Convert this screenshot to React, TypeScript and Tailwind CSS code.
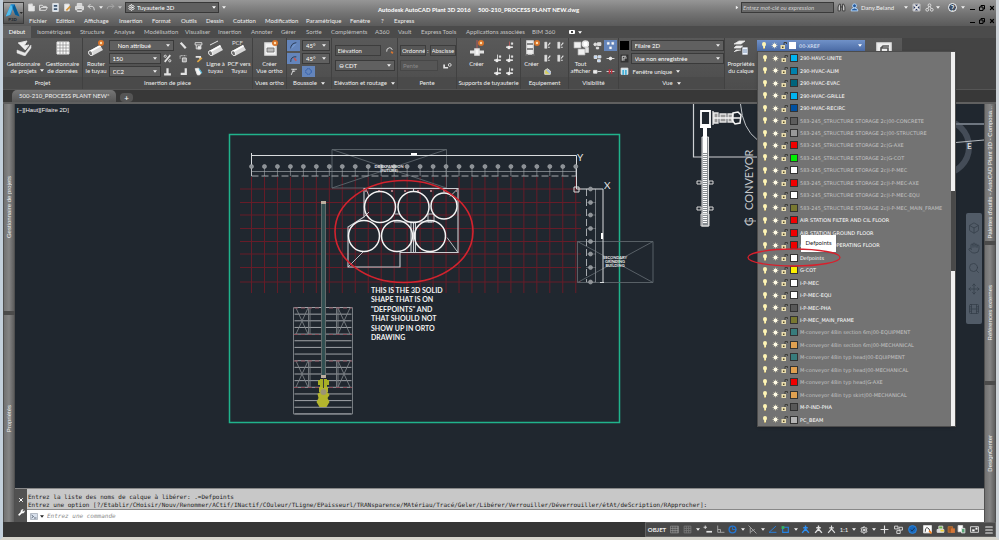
import type { ReactNode } from 'react';
import { X, Wrench, Menu, Settings, Hand, Move, Search, Box, Film } from 'lucide-react';

interface Layer {
  name: string;
  color: string;
  xref?: boolean;
}

const LAYERS: Layer[] = [
  { name: '290-HAVC-UNITE', color: '#00b4f0' },
  { name: '290-HVAC-ALIM', color: '#0080ac' },
  { name: '290-HVAC-EVAC', color: '#00647c' },
  { name: '290-HVAC-GRILLE', color: '#00b4f0' },
  { name: '290-HVAC-RECIRC', color: '#0050a0' },
  { name: '583-245_STRUCTURE STORAGE 2c|00-CONCRETE', color: '#5c5c5c', xref: true },
  { name: '583-245_STRUCTURE STORAGE 2c|00-STRUCTURE', color: '#989898', xref: true },
  { name: '583-245_STRUCTURE STORAGE 2c|G-AXE', color: '#f00000', xref: true },
  { name: '583-245_STRUCTURE STORAGE 2c|G-COT', color: '#00f000', xref: true },
  { name: '583-245_STRUCTURE STORAGE 2c|I-P-MEC', color: '#ffffff', xref: true },
  { name: '583-245_STRUCTURE STORAGE 2c|I-P-MEC-AXE', color: '#f00000', xref: true },
  { name: '583-245_STRUCTURE STORAGE 2c|I-P-MEC-EQU', color: '#ffffff', xref: true },
  { name: '583-245_STRUCTURE STORAGE 2c|I-P-MEC_MAIN_FRAME', color: '#787830', xref: true },
  { name: 'AIR STATION FILTER AND CIL FLOOR', color: '#f00000' },
  { name: 'AIR STATION GROUND FLOOR', color: '#f00000' },
  { name: 'AIR STATION OPERATING FLOOR', color: '#f00000' },
  { name: 'Defpoints', color: '#ffffff' },
  { name: 'G-COT', color: '#fcf000' },
  { name: 'I-P-MEC', color: '#ffffff' },
  { name: 'I-P-MEC-EQU', color: '#ffffff' },
  { name: 'I-P-MEC-PHA', color: '#585858' },
  { name: 'I-P-MEC_MAIN_FRAME', color: '#787830' },
  { name: 'M-conveyor 48in section 6m|00-EQUIPMENT', color: '#387c7c', xref: true },
  { name: 'M-conveyor 48in section 6m|00-MECHANICAL', color: '#e0a050', xref: true },
  { name: 'M-conveyor 48in typ head|00-EQUIPMENT', color: '#387c7c', xref: true },
  { name: 'M-conveyor 48in typ head|00-MECHANICAL', color: '#e0a050', xref: true },
  { name: 'M-conveyor 48in typ head|G-AXE', color: '#f00000', xref: true },
  { name: 'M-conveyor 48in typ skirt|00-MECHANICAL', color: '#e0a050', xref: true },
  { name: 'M-P-IND-PHA', color: '#585858' },
  { name: 'PC_BEAM', color: '#b4b4b4' },
];

const MENUS = [
  { label: 'Fichier', width: 'w-[27px]' },
  { label: 'Edition', width: 'w-[28px]' },
  { label: 'Affichage', width: 'w-[35px]' },
  { label: 'Insertion', width: 'w-[33px]' },
  { label: 'Format', width: 'w-[29px]' },
  { label: 'Outils', width: 'w-[25px]' },
  { label: 'Dessin', width: 'w-[27px]' },
  { label: 'Cotation', width: 'w-[32px]' },
  { label: 'Modification', width: 'w-[41px]' },
  { label: 'Paramétrique', width: 'w-[44px]' },
  { label: 'Fenêtre', width: 'w-[31px]' },
  { label: '?', width: 'w-[13px]' },
  { label: 'Express', width: 'w-[30px]' },
];

const TABS = [
  { label: 'Isométriques', width: 'w-[43px]' },
  { label: 'Structure', width: 'w-[34px]' },
  { label: 'Analyse', width: 'w-[30px]' },
  { label: 'Modélisation', width: 'w-[41px]' },
  { label: 'Visualiser', width: 'w-[33px]' },
  { label: 'Insertion', width: 'w-[33px]' },
  { label: 'Annoter', width: 'w-[30px]' },
  { label: 'Gérer', width: 'w-[25px]' },
  { label: 'Sortie', width: 'w-[25px]' },
  { label: 'Compléments', width: 'w-[44px]' },
  { label: 'A360', width: 'w-[23px]' },
  { label: 'Vault', width: 'w-[23px]' },
  { label: 'Express Tools', width: 'w-[45px]' },
  { label: 'Applications associées', width: 'w-[66px]' },
  { label: 'BIM 360', width: 'w-[30px]' },
];

const Caret = ({ className = '' }: { className?: string }) => (
  <svg viewBox="0 0 6 4" className={`h-[3px] w-[4px] shrink-0 ${className}`} fill="currentColor" aria-hidden="true">
    <path d="M0 0h6L3 4z" />
  </svg>
);

const Icon = ({ size = 'size-[9px]', children }: { size?: string; children: ReactNode }) => (
  <svg viewBox="0 0 16 16" className={`${size} shrink-0`} fill="none" stroke="#e2e2e2" strokeWidth="1.6" aria-hidden="true">
    {children}
  </svg>
);

const Spark = ({ x = 13, y = 3 }: { x?: number; y?: number }) => (
  <g stroke="none">
    <circle cx={x} cy={y} r="3" fill="#d8742a" />
    <circle cx={x} cy={y} r="1.2" fill="#ffe0b0" />
  </g>
);

const Pipe = () => (
  <g stroke="none">
    <path d="M1 11 12 5l3 5-11 6z" fill="#d8d8d8" />
    <path d="m2 10.500 10-5.500 1 1.500-10 5.500z" fill="#fff" />
    <ellipse cx="2.500" cy="13.200" rx="1.800" ry="2.600" fill="#6c6c6c" stroke="#fff" strokeWidth=".8" transform="rotate(-30 2.500 13.200)" />
  </g>
);

const IconButton = ({ label, active, children }: { label: string; active?: boolean; children: ReactNode }) => (
  <button
    type="button"
    aria-label={label}
    className={`flex h-[11px] w-[13px] items-center justify-center ${active ? 'bg-[#6485bb]' : ''}`}
  >
    {children}
  </button>
);

const BigButton = ({ lines, width, caret, children }: { lines: string[]; width: string; caret?: boolean; children: ReactNode }) => (
  <button type="button" className={`relative flex h-9 shrink-0 flex-col items-center ${width}`}>
    {children}
    <span className="mt-1 block leading-[7px] whitespace-nowrap">
      {lines.map((line) => (
        <span key={line} className="block">{line}</span>
      ))}
    </span>
    {caret && <Caret className="absolute right-0 bottom-1" />}
  </button>
);

const Dropdown = ({ label, value, className }: { label: string; value: string; className: string }) => (
  <span className={`relative flex h-[11px] shrink-0 items-center border border-[#3a3a3a] bg-[#606060] ${className}`}>
    <select aria-label={label} className="h-full w-full appearance-none bg-transparent pl-[3px] text-[6px] leading-[9px] text-white outline-none">
      <option>{value}</option>
    </select>
    <Caret className="absolute right-[3px] pointer-events-none" />
  </span>
);

const Panel = ({ title, width, caret, children }: { title: string; width: string; caret?: boolean; children: ReactNode }) => (
  <section className={`flex shrink-0 flex-col border-r border-[#414141] bg-gradient-to-b from-[#595959] to-[#4d4d4d] pt-[2px] ${width}`}>
    <div className="flex flex-1 items-start justify-center">{children}</div>
    <h2 className="flex h-3 items-center justify-center gap-1 bg-[#4a4a4a] whitespace-nowrap">
      {title}
      {caret && <Caret />}
    </h2>
  </section>
);

const QuickAccess = () => (
  <div className="flex items-center gap-[3px] pl-[3px]">
    <Icon><path d="M3 2h6v4h4v8H3z" fill="#e8e8e8" /><path d="M9 1v5h5" /></Icon>
    <Icon><path d="M1 13V4h5l1 2h6v2M1 13l3-5h11l-3 5z" /></Icon>
    <Icon><path d="M3 1h10v14H3z" fill="#d8e4f0" /><path d="M5 5h6M5 11h6" stroke="#40566e" strokeWidth="3" /></Icon>
    <Icon><path d="M3 2h8v12H3z" fill="#eee" /><path d="m6 13 7-7" stroke="#d29338" strokeWidth="3" /></Icon>
    <Icon><path d="M4 6V1h8v5M1 6h14v6H1zM4 10h8v5H4z" fill="#d5d5d5" /><path d="M4 12h8" stroke="#555" /></Icon>
    <Icon><path d="m6 2-4 4 4 4M2 6h7q4 0 4 7" /></Icon>
    <Caret />
    <span className="opacity-40"><Icon><path d="m10 2 4 4-4 4M14 6H6q-4 0-4 5" /></Icon></span>
    <Caret className="opacity-60" />
  </div>
);

const TitleBar = () => (
  <header className="flex bg-gradient-to-b from-[#969696] via-[#747474] to-[#5a5a5a]">
    <button
      type="button"
      aria-label="Menu de l'application"
      className="mt-[2px] flex h-[22px] w-[21px] shrink-0 items-center justify-center border border-[#3c3c3c] bg-gradient-to-b from-[#a9a9a9] to-[#505050]"
    >
      <svg viewBox="0 0 22 22" className="size-5" aria-hidden="true">
        <path d="M8 1h4l6 14-5-2-3-7-2 7-6 2z" fill="#1b87cd" />
        <path d="m8 1 2 4-3 8-5 2z" fill="#54bdec" />
        <path d="m12 1 6 14-5-2-3-8z" fill="#075992" />
        <text x="5" y="20" fontSize="5" fontWeight="bold" fill="#17232d">P3D</text>
        <path d="M18 10h4l-2 2z" fill="#111" />
      </svg>
    </button>
    <div className="flex min-w-0 flex-1 flex-col">
      <div className="flex h-[15px] items-center">
        <QuickAccess />
        <span className="relative ml-[3px] flex h-[11px] w-[94px] shrink-0 items-center border border-[#383838] bg-[#606060] text-white">
          <Settings className="ml-[2px] size-[7px] shrink-0" strokeWidth={3} />
          <select aria-label="Espace de travail" className="w-full appearance-none bg-transparent pl-[2px] text-[6px] leading-[9px] outline-none">
            <option>Tuyauterie 3D</option>
          </select>
          <Caret className="absolute right-[2px]" />
        </span>
        <Caret className="ml-[3px]" />
        <h1 className="flex-1 pt-1 pr-1 text-center text-[6px] font-bold whitespace-pre text-white">
          {'Autodesk AutoCAD Plant 3D 2016     500-210_PROCESS PLANT NEW.dwg'}
        </h1>
        <div className="flex w-[261px] shrink-0 items-center">
          <Caret className="mr-[2px] -rotate-90" />
          <input
            aria-label="Recherche"
            placeholder="Entrez mot-clé ou expression"
            className="h-[11px] w-[93px] border border-[#3a3a3a] bg-[#686868] pl-[1px] text-[6px] italic outline-none placeholder:text-[#d0d0d0]"
          />
          <span className="ml-[3px]"><Icon><path d="M2 14V7l2-5h2v12zm12 0V7l-2-5h-2v12zM6 7h4" fill="#ddd" stroke="#333" /></Icon></span>
          <span className="ml-1"><Icon><circle cx="8" cy="5" r="3.500" stroke="#b8daff" fill="#24599a" /><path d="M2 14q0-5 6-5t6 5z" fill="#24599a" stroke="#b8daff" /></Icon></span>
          <span className="ml-[2px] w-[43px]">Dany.Beland</span>
          <Caret />
          <span className="ml-1"><Icon><path d="M2 2h12v12H2z" fill="#1e2d58" /><path d="m3 3 10 10M13 3 3 13" strokeWidth="3" /></Icon></span>
          <span className="ml-1"><Icon><circle cx="8" cy="4" r="2.500" /><circle cx="4" cy="12" r="2.500" /><circle cx="12" cy="12" r="2.500" /><path d="M7 6 5 10M9 6l2 4" /></Icon></span>
          <Caret className="ml-[2px]" />
          <button type="button" aria-label="Aide" className="ml-2 flex size-[9px] items-center justify-center rounded-full border border-white bg-[#3c4d64] text-[7px] font-bold">?</button>
          <Caret className="ml-1" />
          <WindowButtons />
        </div>
      </div>
      <div className="flex h-[11px] items-center">
        <nav className="flex pl-[5px]" aria-label="Menu">
          {MENUS.map((menu) => (
            <a key={menu.label} href="#" className={`shrink-0 whitespace-nowrap ${menu.width}`}>{menu.label}</a>
          ))}
        </nav>
        <WindowButtons />
      </div>
    </div>
  </header>
);

const WindowButtons = () => (
  <div className="mr-[1px] ml-auto flex items-center gap-1 text-black">
    <button type="button" aria-label="Réduire" className="mt-1 h-[1px] w-[5px] bg-black" />
    <button type="button" aria-label="Restaurer">
      <svg viewBox="0 0 12 12" className="block size-[6px]" fill="none" stroke="currentColor" strokeWidth="2" aria-hidden="true">
        <path d="M1 4h7v7H1zM4 4V1h7v7H8" />
      </svg>
    </button>
    <button type="button" aria-label="Fermer"><X className="size-[6px]" strokeWidth={5} /></button>
  </div>
);

const RibbonTabs = () => (
  <nav className="flex h-3 items-center bg-[#4b4b4b] text-[#c4c4c4]" aria-label="Ruban">
    <a href="#" className="mr-[6px] flex h-full w-[28px] items-center justify-center bg-[#646464] text-white">Début</a>
    {TABS.map((tab) => (
      <a key={tab.label} href="#" className={`shrink-0 whitespace-nowrap ${tab.width}`}>{tab.label}</a>
    ))}
    <span className="ml-[7px] flex h-1 w-[6px] items-center justify-center rounded-[1px] bg-white"><i className="size-[2px] bg-[#444]" /></span>
    <Caret className="ml-[3px] text-white" />
  </nav>
);

const LayerStateIcons = () => (
  <svg viewBox="0 0 26 9" className="h-[9px] w-[26px] shrink-0" aria-hidden="true">
    <path d="M3 1q2 0 2 2Q5 4.500 4 5.500v2H2.200v-2Q1 4.500 1 3 1 1 3 1z" fill="#fff5b4" />
    <path d="M2.200 7h1.800v1H2.200z" fill="#b9a870" />
    <path d="M13.500 1.500v6M10.500 4.500h6M11.500 2.500l4 4M15.500 2.500l-4 4" stroke="#efe6bd" strokeWidth=".6" />
    <circle cx="13.500" cy="4.500" r="1.900" fill="#fffbe6" />
    <path d="M19.500 4h4.500v4h-4.500z" fill="#e8dcae" />
    <path d="M23 4V1.500h2.500V3" fill="none" stroke="#3f3f3a" />
    <path d="M21 5.500h1.500V7H21z" fill="#554b28" />
  </svg>
);

const LayerList = () => (
  <div className="absolute top-full left-0 z-10 flex h-[376px] w-[199px] border border-[#4c4c4c] bg-[#737373] shadow">
    <ul role="listbox" aria-label="Calques" className="grid flex-1 auto-rows-fr">
      {LAYERS.map((layer) => (
        <li
          key={layer.name}
          role="option"
          aria-selected={layer.name === 'Defpoints'}
          className={`relative flex items-center whitespace-nowrap ${layer.xref ? 'text-[#c4c4c4]' : 'text-white'}`}
        >
          <span className="pl-1"><LayerStateIcons /></span>
          <i className="mr-[2px] ml-[2px] size-2 border border-[#333]" style={{ backgroundColor: layer.color }} />
          {layer.name}
          {layer.name === 'Defpoints' && (
            <>
              <svg viewBox="0 0 94 19" className="absolute -left-[11px] z-10 h-[19px] w-[94px]" fill="none" aria-hidden="true">
                <ellipse cx="47" cy="9.500" rx="46" ry="8.500" stroke="#d8202c" strokeWidth="1.300" />
              </svg>
              <span role="tooltip" className="absolute bottom-3 left-[43px] flex h-[17px] w-[35px] items-center justify-center bg-white font-[Lato,sans-serif] text-[6px] text-[#222] shadow">Defpoints</span>
            </>
          )}
        </li>
      ))}
    </ul>
    <div className="flex w-1 flex-col bg-[#f0f0f0]">
      <i className="mt-[139px] h-20 bg-[#494949]" />
    </div>
  </div>
);

const Ribbon = () => (
  <div className="flex h-[51px] bg-[#444]">
    <Panel title="Projet" width="w-[80px]">
      <BigButton lines={['Gestionnaire', 'de projets']} width="w-[40px]" caret>
        <Icon size="size-[16px]"><path d="m2 3 9-2-3 5 5-1-4 5" fill="#eee" strokeWidth="1" /><path d="m1 10 8 3 6-8v3l-6 8-8-3z" fill="#e8e8e8" strokeWidth=".5" /></Icon>
      </BigButton>
      <BigButton lines={['Gestionnaire', 'de données']} width="w-[38px]">
        <Icon size="size-[16px]"><path d="M2 2h12v12H2z" fill="#fafafa" strokeWidth="1" /><path d="M2 5h12M2 8h12M2 11h12M5 2v12M8 2v12M11 2v12" stroke="#8a8a8a" strokeWidth=".7" /></Icon>
      </BigButton>
    </Panel>
    <Panel title="Insertion de pièce" width="w-[170px]">
      <BigButton lines={['Router', 'le tuyau']} width="w-[25px]">
        <Icon size="size-[16px]"><Pipe /><Spark /></Icon>
      </BigButton>
      <div className="flex w-[68px] flex-col gap-[2px]">
        <Dropdown label="Ligne" value="Non attribué" className="w-[65px] pl-[5px]" />
        <div className="flex items-center"><Dropdown label="Taille" value="150" className="w-[52px]" /><IconButton label="Raccord"><Icon><path d="m3 14 10-12" strokeWidth="3" /><circle cx="4" cy="4" r="2" /><circle cx="12" cy="12" r="2" /></Icon></IconButton></div>
        <div className="flex items-center"><Dropdown label="Spécification" value="CC2" className="w-[52px]" /><IconButton label="Té"><Icon><path d="M8 2v9M2 13h12" strokeWidth="4" /></Icon></IconButton></div>
      </div>
      <div className="grid grid-cols-2 gap-x-[2px] gap-y-[2px]">
        <IconButton label="Coude"><Icon><path d="m3 3 9 10" strokeWidth="4" /></Icon></IconButton>
        <IconButton label="Catalogue"><Icon><path d="M2 3h12v4H2zM4 7v7h8V7" /><path d="M7 10h5v4H7z" fill="#eee" /></Icon></IconButton>
        <IconButton label="Cadre"><Icon><path d="M2 8V3h11" strokeDasharray="2 1" /><path d="M6 7h7v7H6z" fill="#999" /></Icon></IconButton>
        <IconButton label="Modifier"><Icon><path d="M3 5h8v4" strokeWidth="3" /><path d="m6 14 8-7" stroke="#e0a744" strokeWidth="3" /></Icon></IconButton>
        <IconButton label="Angle"><Icon><path d="M12 2v10H3" strokeWidth="4" /></Icon></IconButton>
        <IconButton label="Isolant"><Icon><path d="m2 3 6-1 5 8-3 4H6z" fill="#f3f3f3" /><path d="m9 3 5 8" stroke="#55b8d8" strokeWidth="2" /></Icon></IconButton>
      </div>
      <BigButton lines={['Ligne à', 'tuyau']} width="w-[22px]">
        <Icon size="size-[16px]"><Pipe /><path d="m2 5 8-4" strokeWidth="1" /></Icon>
      </BigButton>
      <BigButton lines={['PCF vers', 'Tuyau']} width="w-[25px]">
        <Icon size="size-[16px]"><Pipe /><text x="1" y="5" fontSize="6" fill="#ddd" stroke="none">PCF</text></Icon>
      </BigButton>
    </Panel>
    <Panel title="Vues ortho" width="w-[34px]">
      <BigButton lines={['Créer', 'Vue ortho']} width="w-[32px]">
        <Icon size="size-[16px]"><path d="M3 3h8l3 3v9H3z" fill="#f2f2f2" /><path d="M5 8h7v4H5z" fill="#b8b8b8" stroke="#666" strokeWidth=".8" /><Spark /></Icon>
      </BigButton>
    </Panel>
    <Panel title="Boussole" width="w-[45px]" caret>
      <div className="grid grid-cols-[14px_29px] gap-x-[1px] gap-y-[2px]">
        <IconButton label="Accrochage" active><Icon><path d="M3 14Q3 4 13 3" stroke="#26344c" /><path d="m3 14 9-9" stroke="#80a8e0" /></Icon></IconButton>
        <Dropdown label="Pas angulaire" value="45°" className="w-[28px]" />
        <IconButton label="Tolérance" active><Icon><path d="M3 14Q3 4 13 5" stroke="#26344c" /><path d="m9 7 4 5" stroke="#bf5757" strokeWidth="3" /></Icon></IconButton>
        <Dropdown label="Tolérance angulaire" value="45°" className="w-[28px]" />
        <IconButton label="Plan"><Icon><path d="m4 14 4-10M4 4h10M7 8l4-1" /></Icon></IconButton>
        <IconButton label="Boussole" active><Icon><circle cx="8" cy="8" r="5" stroke="#2252a5" strokeDasharray="3 1" /></Icon></IconButton>
      </div>
    </Panel>
    <Panel title="Elévation et routage" width="w-[66px]" caret>
      <div className="flex w-[60px] flex-col gap-1 pt-[5px]">
        <div className="flex items-center gap-1">
          <input aria-label="Elévation" defaultValue="Elévation" className="h-[11px] w-[46px] border border-[#3d3d3d] bg-[#565656] pl-[2px] text-[6px]" />
          <Icon><path d="M3 10q-1-6 5-7 4 0 5 4" /><path d="m11 10 3 3" stroke="#dc772f" strokeWidth="3" /></Icon>
        </div>
        <div className="flex items-center">
          <Dropdown label="Ligne d'axe" value="⊖ CDT" className="w-[60px]" />
        </div>
      </div>
    </Panel>
    <Panel title="Pente" width="w-[59px]">
      <div className="flex w-[54px] flex-col gap-1 pt-[5px]">
        <div className="flex items-center gap-[1px]">
          <input aria-label="Ordonnée" defaultValue="Ordonné" className="h-[11px] w-[26px] border border-[#3d3d3d] bg-[#565656] pl-[1px] text-[6px]" />
          :
          <input aria-label="Abscisse" defaultValue="Abscisse" className="h-[11px] w-[26px] border border-[#3d3d3d] bg-[#565656] pl-[1px] text-[6px]" />
        </div>
        <div className="flex items-center gap-[5px]">
          <input aria-label="Pente" placeholder="Pente" className="h-[11px] w-[38px] border border-[#474747] bg-[#565656] pl-[2px] text-[6px] placeholder:text-[#888]" />
          <Icon><path d="M2 6v6h7" strokeWidth="3" /><circle cx="12" cy="7" r="2.500" /></Icon>
        </div>
      </div>
    </Panel>
    <Panel title="Supports de tuyauterie" width="w-[64px]">
      <BigButton lines={['Créer']} width="w-[28px]">
        <Icon size="size-[16px]"><path d="M8 0v10" stroke="#b05c5c" strokeWidth="1" /><path d="M1 12h14" strokeWidth="3" /><path d="M6 9h4v6H6z" fill="#f5f5f5" /><Spark x={12} /></Icon>
      </BigButton>
      <SupportGrid />
    </Panel>
    <Panel title="Equipement" width="w-[48px]">
      <BigButton lines={['Créer']} width="w-[18px]">
        <Icon size="size-[16px]"><path d="M3 1h6v13H3z" fill="#eee" /><path d="M3 4h6M3 9h6M1 15h3M8 15h3" stroke="#666" /><Spark /></Icon>
      </BigButton>
      <div className="grid grid-cols-2 gap-y-[2px]">
        {['Modifier', 'Convertir', 'Attacher', 'Détacher'].map((label) => (
          <IconButton key={label} label={label}><Icon><path d="M3 2h4v11H3z" fill="#ddd" strokeWidth=".8" /><path d="m9 8 4-5M9 11h3" strokeWidth="2" /></Icon></IconButton>
        ))}
        <IconButton label="Buse"><Icon><path d="M3 13V6l5-3 5 4v6z" fill="#d4cd5e" /><path d="m7 5 6 6" stroke="#9ebbf3" strokeWidth="3" /></Icon></IconButton>
      </div>
    </Panel>
    <Panel title="Visibilité" width="w-[50px]">
      <BigButton lines={['Tout', 'afficher']} width="w-[21px]">
        <Icon size="size-[16px]"><path d="M1 2h7v6H1zM5 9h7v6H5z" fill="#f0f0f0" stroke="#aaa" strokeWidth=".7" /><circle cx="12.500" cy="4" r="3" fill="#fff" /><path d="M13 8h2v4h-2z" fill="#ddd" /></Icon>
      </BigButton>
      <div className="grid grid-cols-2 gap-y-[2px]">
        <IconButton label="Isoler"><Icon><circle cx="4" cy="6" r="2.500" fill="#ddd" /><path d="M8 3h6v5H8zM6 11h4v3H6z" fill="#ddd" /></Icon></IconButton>
        <IconButton label="Masquer" active><Icon><path d="M2 2h4v4H2zM10 2h4v4h-4zM6 10h4v4H6z" fill="#fff" strokeWidth=".5" /></Icon></IconButton>
        <IconButton label="Inverser"><Icon><path d="M2 3h5v5H2zM9 3h5v4H9zM8 10h5v4H8z" fill="#b7d7ff" /></Icon></IconButton>
        <IconButton label="Joint"><Icon><path d="M1 8h14" /><circle cx="8" cy="8" r="2.500" fill="#eee" /></Icon></IconButton>
        <IconButton label="Ligne"><Icon><path d="M1 6h6v5H1z" fill="#eee" /><path d="M8 8h7" /></Icon></IconButton>
        <IconButton label="Déconnexion"><Icon><path d="M1 8h14" /><path d="M6 4v8M10 4v8" stroke="#c12e3c" strokeWidth="2.500" /></Icon></IconButton>
      </div>
    </Panel>
    <Panel title="Vue" width="w-[106px]" caret>
      <div className="flex w-[104px] flex-col gap-[2px]">
        <div className="flex items-center gap-[2px]"><i className="size-[9px] shrink-0 bg-black" /><Dropdown label="Style visuel" value="Filaire 2D" className="w-[93px]" /></div>
        <div className="flex items-center gap-[2px]"><Icon><path d="M1 1h14v14H1z" fill="#333" stroke="none" /><path d="M4 12V4h7M7 12V7h5" /></Icon><Dropdown label="Vue" value="Vue non enregistrée" className="w-[93px]" /></div>
        <button type="button" className="flex h-[11px] items-center gap-1"><Icon><path d="M2 2h12v11H2z" fill="#e3f6ff" /><path d="M4 5h8v9H4z" fill="#45afd7" stroke="none" /><path d="M8 5v9" /></Icon>Fenêtre unique<Caret /></button>
      </div>
    </Panel>
    <section className="flex w-[177px] shrink-0 items-start bg-gradient-to-b from-[#595959] to-[#4d4d4d] pt-[2px]">
      <BigButton lines={['Propriétés', 'du calque']} width="w-[32px]">
        <Icon size="size-[16px]"><path d="m1 4 5-3h6L8 4zM1 8l2-2h7L8 8zM1 12l2-2h5" fill="#f0f0f0" strokeWidth=".8" /><path d="M9 7h6v8H9z" fill="#eef5ff" stroke="#555" strokeWidth=".7" /><path d="M10 10h4M10 12h4" stroke="#58779f" strokeWidth=".8" /></Icon>
      </BigButton>
      <div className="relative font-['DejaVu_Sans',sans-serif] text-[5px]">
        <button type="button" aria-haspopup="listbox" aria-expanded="true" className="flex h-[11px] w-[108px] items-center bg-gradient-to-b from-[#7091c8] to-[#4b6ba5] pr-[3px] pl-1 text-[#e6eefb]">
          <LayerStateIcons />
          <i className="mr-[3px] ml-[2px] size-[7px] bg-white" />
          00-XREF
          <Caret className="ml-auto text-white" />
        </button>
        <LayerList />
      </div>
      <span className="ml-[11px] pt-[1px]"><Icon size="size-[16px]"><path d="M1 2h14v13H1z" fill="#eee" /><path d="M5 14V7h7v8M5 7l2-2h6" stroke="#555" /></Icon></span>
    </section>
  </div>
);

const SupportGrid = () => (
  <div className="grid grid-cols-[12px_12px] gap-y-[2px]">
    {['Ajouter', 'Modifier', 'Attacher', 'Copier', 'Convertir', 'Verrouiller'].map((label, i) => (
      i === 0 ? <span key={label} /> : (
        <IconButton key={label} label={label}><Icon><path d="M8 1v9" stroke={i === 1 ? '#b65a5a' : '#ddd'} /><path d="M2 11h12" strokeWidth="3" /><path d="M5 9h4v5H5zM11 3h3v3h-3z" fill="#eee" strokeWidth=".7" /></Icon></IconButton>
      )
    ))}
  </div>
);

const DocumentTabs = () => (
  <div className="flex h-[15px] items-end border-t border-[#555] border-b-2 border-b-[#606060] bg-[#383838]">
    <button type="button" className="ml-[9px] flex h-3 w-[104px] items-center justify-between rounded-t-[5px] bg-gradient-to-b from-[#777] to-[#575757] pr-[6px] pl-[7px] text-[6px] whitespace-nowrap">
      500-210_PROCESS PLANT NEW*
      <X className="size-[5px] text-[#333]" strokeWidth={4} />
    </button>
    <button type="button" aria-label="Nouveau dessin" className="ml-1 flex h-[9px] w-[13px] items-center justify-center rounded-[4px] bg-[#555] text-[8px] font-bold">+</button>
  </div>
);

const GRID_X = Array.from({ length: 26 }, (_, i) => 251.5 + i * 12.97);
const GRID_Y = [189, 202.5, 215, 228.5, 241.5, 254, 267.5, 282];
const FLOOR_Y = Array.from({ length: 17 }, (_, i) => 307.5 + i * 6.65);
const TANKS = [
  { x: 380, y: 207, r: 15.5 },
  { x: 413.5, y: 207, r: 15.5 },
  { x: 444, y: 206, r: 13 },
  { x: 364, y: 236, r: 15.5 },
  { x: 397, y: 236, r: 15.5 },
  { x: 430, y: 236, r: 15.5 },
];
const NOTE = ['THIS IS THE 3D SOLID', 'SHAPE THAT IS ON', '"DEFPOINTS" AND', 'THAT SHOULD NOT', 'SHOW UP IN ORTO', 'DRAWING'];

const Plan = () => (
  <svg viewBox="15 104 969 384" preserveAspectRatio="xMinYMin slice" className="absolute inset-0 h-full w-full" fill="none">
    <g stroke="#671c28" strokeWidth="1">
      {GRID_X.map((x) => <path key={x} d={`M${x} 177V293`} />)}
      {GRID_Y.map((y) => <path key={y} d={`M240 ${y}H581`} />)}
    </g>
    <path d="M229.500 134.500h390v288h-390z" stroke="#20b38c" strokeWidth="1.500" />

    <g stroke="#5f666d" strokeWidth=".9">
      <path d="M332 149.500h114.500V188H332zl114.500 38.500M446.500 149.500 332 188" />
      <path d="M577.500 241.500H653v41h-75.500zl75.500 41M653 241.500l-75.500 41" />
      <path d="M251.500 171.500H576M595.500 189v93" stroke="#80868c" />
    </g>
    <path d="M251.500 176H576M586.500 189v93" stroke="#a5a9ad" strokeDasharray="7 3" />
    <path d="M251.500 153v23M251.500 155.500H576.500V189H603v93.500M600 282.500h4" stroke="#d9dcde" />
    <path d="M411 153h6v2h-6zM601 233h2v6h-2z" fill="#fff" />
    <path d="M574 187h5v5h-5z" stroke="#ddd" />
    <g fill="#8b9095" stroke="#a6aaad" strokeWidth=".6">
      {GRID_X.map((x) => <g key={x}><circle cx={x} cy="166.500" r="2" /><path d={`M${x} 168v8`} /></g>)}
      {GRID_Y.map((y) => <g key={y}><circle cx="590.500" cy={y} r="2" /><path d={`M586 ${y}h10`} strokeWidth=".4" /></g>)}
    </g>
    <g fill="#e4e4e4" fontSize="10">
      <text x="577" y="161">Y</text>
      <text x="604" y="189">X</text>
    </g>
    <g fill="#e8e8e8" fontSize="4" fontWeight="bold" textAnchor="middle">
      <text x="389" y="168">DE EXPANSION</text>
      <text x="389" y="172">(FUTURE)</text>
      <text x="615" y="259">SECONDARY</text>
      <text x="615" y="263">GRINDING</text>
      <text x="615" y="267">BUILDING</text>
    </g>

    <g stroke="#c9ccd0" strokeWidth="1.100">
      <path d="M364 188.500h94v64h-58V267h-52v-40l16-10zM413.500 188.500v3M411 223v29M413.500 222v30M415.500 223v29" />
      <path d="m348 267 15-15M458 252.500l-11-15M458 188.500l-8 8M364 217l5-5M366 189l3 7M395 214h5M394 222h38M428 214h6v8h-6z" strokeWidth=".9" />
      <path d="M365 191h92" stroke="#a8737b" strokeDasharray="2 11" strokeWidth="2" />
    </g>
    <g stroke="#f4f4f4" strokeWidth="1.500">
      {TANKS.map((tank) => <circle key={`${tank.x}-${tank.y}`} cx={tank.x} cy={tank.y} r={tank.r} />)}
    </g>
    <ellipse cx="404" cy="231.500" rx="69" ry="51" stroke="#d2232e" strokeWidth="1.600" />

    <path d="M293.500 307.500h59V414h-59z" stroke="#777d82" />
    <g stroke="#a0a4a8">{FLOOR_Y.map((y) => <path key={y} d={`M294.500 ${y}h57`} />)}</g>
    <g stroke="#7b8085" strokeWidth=".9">
      {[308, 361].map((y) => (
        <g key={y}>
          <path d={`M296 ${y}l12 26M308 ${y}l-12 26M338 ${y}l12 26M350 ${y}l-12 26`} />
          <path d={`M308.500 ${y}v26M310 ${y}v26M336.500 ${y}v26M338 ${y}v26`} />
        </g>
      ))}
    </g>
    <path d="M294 308h58M294 334.500h58M294 361h58M294 387.500h58" stroke="#89505c" strokeDasharray="4 3" />
    <path d="M321.500 203h4v173h-4z" fill="#315052" stroke="#6a7170" strokeWidth=".9" />
    <path d="M321 201h5v3h-5zM321 375h5v3h-5z" fill="#bcae9f" />
    <path d="M318 380h4v5h-4zM325 380h4v5h-4zM320 379h7v8h-7z" fill="#a8af25" />
    <path d="M319 387h9v5h-9zM317.500 394l4-3h5l3 4-2 3 2 4-3 5h-7l-3-5 2-4z" fill="#b3b52d" />
    <circle cx="323.500" cy="392" r="3" fill="#9c9574" />
    <path d="M323.500 378v10" stroke="#3c3939" />

    <g fill="#f1f1f1" fontSize="7" fontWeight="bold">
      {NOTE.map((line, i) => <text key={line} x="371" y={293 + Math.round(i * 9.4)}>{line}</text>)}
    </g>

    <path d="M693.500 104v53H757" stroke="#cdd0d3" strokeWidth="1.200" />
    <path d="M740.500 104q2 25 17 36" stroke="#c0c4c8" />
    <path d="M701 111h9v14h-9zM700 127h11" stroke="#fff" strokeWidth="1.800" />
    <path d="M713 111v14M714 113h4v10h-4zM720 114h6v8h-6zM728 114h5v8h-5z" stroke="#e6e6e6" strokeWidth="1.300" fill="#999" />
    <path d="m733 113 5-1 3 3-1 8-5 1-3-4zM714 118h26" stroke="#f5f5f5" strokeWidth="1.500" />
    <path d="M702 137h6.500v89H702z" fill="#888d92" stroke="#ddd" />
    <path d="M705 126v26" stroke="#fff" strokeWidth="4" />
    <path d="M705 152v72" stroke="#fff" strokeWidth="4" strokeDasharray="1 1" />
    <path d="M697 181h4v3h-4zM709 181h4v3h-4zM697 207h4v3h-4zM709 207h4v3h-4zM701 214h8v12h-8z" stroke="#d9d9d9" />
    <g fill="#c6c9cc">
      <text transform="translate(753 210) rotate(-90)" fontSize="11">CONVEYOR</text>
      <text transform="translate(753 226) rotate(-90)" fontSize="12">G</text>
    </g>
    <path d="M744 221h12" stroke="#c6c9cc" strokeWidth=".8" />

    <circle cx="942" cy="147" r="27" stroke="#444c57" strokeWidth="6" />
    <path d="M950 124h34" stroke="#6e7680" strokeWidth="2" />
    <path d="m950 143 34-3" stroke="#b5babf" />
    <text x="967" y="149" fontSize="8" fontWeight="bold" fill="#d8dade">E</text>
  </svg>
);

const NavigationBar = () => (
  <div className="absolute top-[109px] right-[2px] flex h-[111px] w-4 flex-col items-center justify-around rounded-[2px] bg-[#515b67] py-[5px] text-[#343d48]">
    <button type="button" aria-label="Vue"><Box className="size-3" strokeWidth={1.5} /></button>
    <button type="button" aria-label="Panoramique"><Hand className="size-3" strokeWidth={1.5} /></button>
    <button type="button" aria-label="Zoom"><Search className="size-3" strokeWidth={1.5} /></button>
    <button type="button" aria-label="Orbite"><Move className="size-3" strokeWidth={1.5} /></button>
    <button type="button" aria-label="ShowMotion"><Film className="size-3" strokeWidth={1.5} /></button>
  </div>
);

const CommandLine = () => (
  <div className="flex h-[34px] shrink-0 border-t border-[#888] text-[6px] font-['DejaVu_Sans_Mono',monospace] text-[#222]">
    <div className="flex w-3 flex-col items-center justify-between bg-[#515151] pt-2 pb-[6px] text-white">
      <X className="size-[6px]" strokeWidth={4} />
      <Wrench className="size-[7px] fill-white" strokeWidth={2} />
    </div>
    <div className="flex min-w-0 flex-1 flex-col">
      <div className="flex-1 border-b border-[#888] bg-[#c8c8c8] pt-1 pl-[1px] leading-2 whitespace-pre">
        <p>Entrez la liste des noms de calque à libérer: .=Defpoints</p>
        <p>Entrez une option [?/Etablir/CHoisir/Nouv/Renommer/ACtif/INactif/COuleur/TLigne/EPaisseurl/TRANsparence/MAtériau/Tracé/Geler/Libérer/Verrouiller/Déverrouiller/étAt/deScription/RApprocher]:</p>
      </div>
      <div className="flex h-3 items-center bg-white pl-[3px]">
        <svg viewBox="0 0 16 14" className="h-[7px] w-2" aria-hidden="true">
          <path d="M1 1h14v12H1z" fill="#d7dfeb" stroke="#7d8794" />
          <path d="m3 4 4 3-4 3M8 10h5" fill="none" stroke="#3e4959" strokeWidth="1.500" />
        </svg>
        <Caret className="ml-[2px]" />
        <input aria-label="Commande" placeholder="Entrez une commande" className="ml-[3px] flex-1 italic outline-none placeholder:text-[#8a8a8a]" />
      </div>
    </div>
  </div>
);

const StatusCell = ({ width, label, children }: { width: string; label: string; children: ReactNode }) => (
  <button type="button" aria-label={label} className={`flex h-full shrink-0 items-center justify-center gap-1 ${width}`}>{children}</button>
);

const StatusBar = () => (
  <footer className="flex h-[15px] shrink-0 justify-end bg-[#353535]">
    <div className="flex items-center border border-[#626262] bg-[#494949]">
      <StatusCell width="w-[22px]" label="Espace objet"><b>OBJET</b></StatusCell>
      <StatusCell width="w-[13px]" label="Grille"><Icon><path d="M1 2h14v12H1zM5 2v12M9 2v12M13 2v12M1 6h14M1 10h14" stroke="#a5a5a5" strokeWidth="1" /></Icon></StatusCell>
      <StatusCell width="w-[20px]" label="Accrochage"><span className="opacity-30"><Icon><path d="M2 2h12v12H2zM6 2v12M10 2v12M2 6h12M2 10h12" /></Icon></span><Caret /></StatusCell>
      <StatusCell width="w-[13px]" label="Saisie dynamique"><Icon><path d="M1 4h6M4 1v6" /><path d="M6 12h10" strokeWidth="3" /></Icon></StatusCell>
      <StatusCell width="w-[12px]" label="Ortho"><Icon><path d="M3 1v12h12M3 8h5v5" stroke="#aaa" /></Icon></StatusCell>
      <StatusCell width="w-[20px]" label="Repérage polaire"><Icon><circle cx="8" cy="8" r="6" stroke="#2476d2" strokeWidth="2.500" /><path d="M8 8h7M8 8V4" stroke="#2476d2" /></Icon><Caret /></StatusCell>
      <StatusCell width="w-[20px]" label="Isométrique"><Icon><path d="m1 1 14 14M4 15V5M12 8 5 12" stroke="#aaa" /></Icon><Caret /></StatusCell>
      <StatusCell width="w-[13px]" label="Repérage"><Icon><path d="M14 2 2 13h13" stroke="#2686ea" /></Icon></StatusCell>
      <StatusCell width="w-[20px]" label="Accrochage objet"><Icon><path d="M3 4h10v9H3z" stroke="#2583e2" strokeWidth="2" /><path d="M1 2h5v5H1z" fill="#34b45f" stroke="none" /></Icon><Caret /></StatusCell>
      {['#2e90f4', '#e2e2e2', '#e2e2e2'].map((color, i) => (
        <StatusCell key={i} width="w-[13px]" label={`Annotation ${i + 1}`}><Icon><path d="M8 1v6L2 14M8 7l6 7M4 5h8" stroke={color} strokeWidth={i === 2 ? 2 : 2.500} /></Icon></StatusCell>
      ))}
      <StatusCell width="w-[20px]" label="Echelle">1:1<Caret /></StatusCell>
      <StatusCell width="w-[20px]" label="Espace de travail"><Settings className="size-[8px]" strokeWidth={3} /><Caret /></StatusCell>
      <StatusCell width="w-[13px]" label="Moniteur"><Icon><path d="M8 1v14M1 8h14" strokeWidth="2" /></Icon></StatusCell>
      <StatusCell width="w-[14px]" label="Isoler"><Icon><path d="M1 2h6v5H1zM9 4h6v5H9zM5 10h6v5H5z" /></Icon></StatusCell>
      <StatusCell width="w-[15px]" label="Performances"><Icon><circle cx="8" cy="8" r="7" fill="#1868bc" stroke="#2d87df" /><path d="m5 8 2 3 5-6" stroke="#143051" /></Icon></StatusCell>
      <StatusCell width="w-[15px]" label="Suivi"><Icon><path d="M1 1h14v13H1z" fill="#fff" /><path d="M4 12q0-8 4-7t4 7" stroke="#333" /><path d="m11 10 4 5" stroke="#f38222" strokeWidth="3" /></Icon></StatusCell>
      <StatusCell width="w-[11px]" label="Tracé"><Icon><path d="M2 8h12v5H2z" fill="#dadada" /><path d="M5 2h7v5H5z" fill="#69b641" /><path d="M8 10h6" stroke="#eed033" strokeWidth="3" /></Icon></StatusCell>
      <StatusCell width="w-[10px]" label="Coller"><Icon><path d="M2 3h8v10H2z" fill="#a45824" stroke="#b87339" /><path d="M7 6h7v8H7z" fill="#d37638" stroke="none" /></Icon></StatusCell>
      <StatusCell width="w-[11px]" label="Xref"><Icon><path d="M2 1h8v11H2z" fill="#fff" /><path d="M8 6h6v8H8z" fill="#58a575" /></Icon></StatusCell>
      <StatusCell width="w-[15px]" label="Plein écran"><Icon><path d="M1 3h14v10H1z" /><path d="M4 8h4v3H4zM10 5h3v3h-3z" fill="#fff" strokeWidth=".5" /></Icon></StatusCell>
      <StatusCell width="w-[13px]" label="Personnalisation"><Menu className="size-[10px]" strokeWidth={2.5} /></StatusCell>
    </div>
  </footer>
);

const SidePalette = ({ items }: { items: { label: string; size: string }[] }) => (
  <aside className="flex w-3 shrink-0 flex-col gap-1 bg-[#4b4b4b] font-['Liberation_Sans',sans-serif]">
    {items.map((item) => (
      <button
        key={item.label}
        type="button"
        className={`flex min-h-0 items-center justify-center border-x border-[#505050] bg-gradient-to-r from-[#727272] via-[#858585] to-[#5e5e5e] text-[6px] ${item.size}`}
      >
        <span className="rotate-180 whitespace-nowrap [writing-mode:vertical-rl]">{item.label}</span>
      </button>
    ))}
  </aside>
);

export default function App() {
  return (
    <div className="flex h-screen overflow-hidden border-r-3 border-b-3 border-l-3 border-r-[#cdd3d8] border-b-[#d6d4cc] border-l-[#c3d0dc] bg-[#353535] font-[Lato,sans-serif] text-[6px] leading-[8px] text-[#f0f0f0]">
      <div className="flex min-w-0 flex-1 flex-col">
        <TitleBar />
        <RibbonTabs />
        <Ribbon />
        <DocumentTabs />
        <div className="flex min-h-0 flex-1">
          <SidePalette items={[{ label: 'Gestionnaire de projets', size: 'flex-1' }, { label: 'Propriétés', size: 'flex-1' }]} />
          <main className="flex min-w-0 flex-1 flex-col">
            <div className="relative min-h-0 flex-1 bg-[#20272f]">
              <p className="p-[2px] font-['Liberation_Sans',sans-serif]">[−][Haut][Filaire 2D]</p>
              <Plan />
              <NavigationBar />
            </div>
            <CommandLine />
          </main>
          <SidePalette
            items={[
              { label: "Palettes d'outils - AutoCAD Plant 3D - Composa...", size: 'flex-1' },
              { label: 'Références externes', size: 'flex-1' },
              { label: 'DesignCenter', size: 'flex-1' },
            ]}
          />
        </div>
        <StatusBar />
      </div>
    </div>
  );
}
